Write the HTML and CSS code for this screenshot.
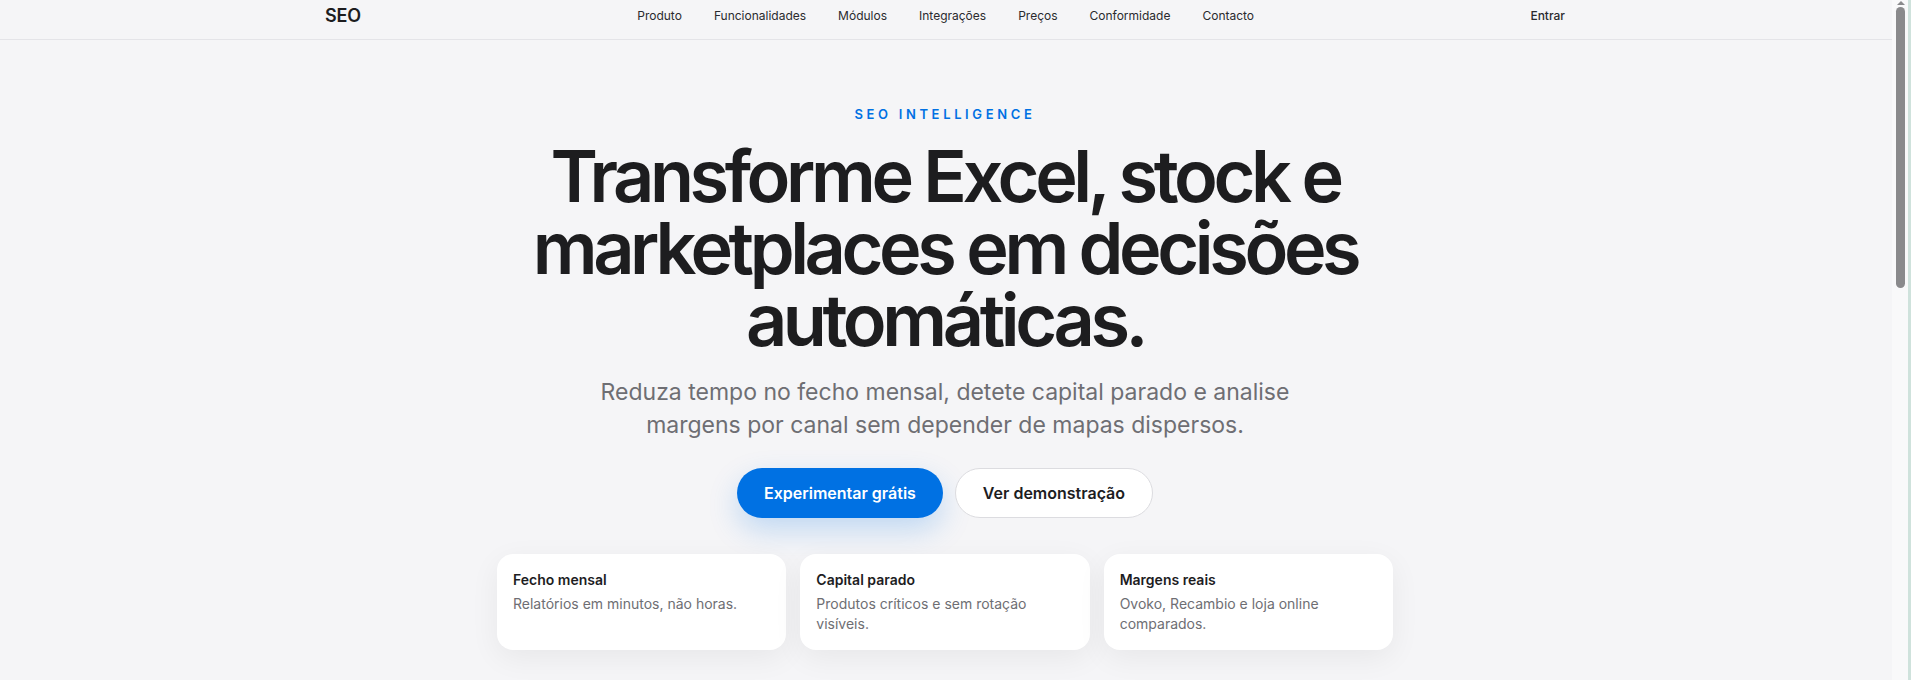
FILE: index.html
```html
<!DOCTYPE html>
<html lang="pt">
<head>
<meta charset="utf-8">
<title>SEO — Inteligência para stock e marketplaces</title>
<link rel="stylesheet" href="styles.css">
</head>
<body>
<header class="site-header">
  <div class="bar">
    <a class="logo" href="#">SEO</a>
    <nav class="menu">
      <a href="#">Produto</a>
      <a href="#">Funcionalidades</a>
      <a href="#">Módulos</a>
      <a href="#">Integrações</a>
      <a href="#">Preços</a>
      <a href="#">Conformidade</a>
      <a href="#">Contacto</a>
    </nav>
    <a class="login" href="#">Entrar</a>
  </div>
</header>

<main>
  <section class="hero">
    <p class="eyebrow">SEO INTELLIGENCE</p>
    <h1 class="title">Transforme Excel, stock e marketplaces em decisões automáticas.</h1>
    <p class="lead">Reduza tempo no fecho mensal, detete capital parado e analise margens por canal sem depender de mapas dispersos.</p>
    <div class="actions">
      <a class="btn btn-primary" href="#">Experimentar grátis</a>
      <a class="btn btn-secondary" href="#">Ver demonstração</a>
    </div>
    <div class="highlights">
      <div class="card">
        <h3>Fecho mensal</h3>
        <p>Relatórios em minutos, não horas.</p>
      </div>
      <div class="card">
        <h3>Capital parado</h3>
        <p>Produtos críticos e sem rotação visíveis.</p>
      </div>
      <div class="card">
        <h3>Margens reais</h3>
        <p>Ovoko, Recambio e loja online comparados.</p>
      </div>
    </div>
  </section>
</main>

<!-- window scroll rail, drawn over the right edge -->
<div class="scroll-rail" aria-hidden="true">
  <span class="rail-arrow"></span>
  <span class="rail-thumb"></span>
</div>
</body>
</html>
```

FILE: styles.css
```css
html {
  background: #f5f5f7;
}

body {
  margin: 0;
  padding-right: 21px;
  min-height: 680px;
  overflow: hidden;
  background: #f5f5f7;
  color: #1d1d1f;
  font-family: Inter, "Noto Sans", "Liberation Sans", sans-serif;
  -webkit-font-smoothing: antialiased;
}

a {
  color: inherit;
  text-decoration: none;
}

/* header */
.site-header {
  border-bottom: 1px solid #e4e4e8;
  margin-right: -21px;
  padding-right: 21px;
}
.bar {
  max-width: 1240px;
  margin: 0 auto;
  height: 30px;
  padding-bottom: 9px;
  display: flex;
  align-items: center;
  justify-content: space-between;
}
.logo {
  font-size: 18px;
  font-weight: 600;
  letter-spacing: -0.01em;
}
.menu {
  display: flex;
  gap: 32px;
}
.menu a,
.login {
  font-size: 12px;
  color: #2a2a2e;
}
.login {
  font-weight: 500;
}

/* hero */
.hero {
  padding-top: 64px;
  display: flex;
  flex-direction: column;
  align-items: center;
  text-align: center;
}
.eyebrow {
  margin: 0;
  font-size: 13px;
  line-height: 20px;
  font-weight: 600;
  letter-spacing: 0.28em;
  color: #0071e3;
}
.title {
  margin: 16px 0 0;
  max-width: 900px;
  font-size: 72px;
  line-height: 72px;
  font-weight: 600;
  letter-spacing: -0.061em;
}
.lead {
  margin: 20px 0 0;
  max-width: 740px;
  font-size: 23px;
  line-height: 33px;
  color: #6e6e73;
}
.actions {
  margin-top: 26px;
  display: flex;
  gap: 12px;
}
.btn {
  height: 50px;
  box-sizing: border-box;
  padding: 0 27px;
  border-radius: 25px;
  display: flex;
  align-items: center;
  font-size: 16px;
  font-weight: 600;
}
.btn-primary {
  background: #0071e3;
  color: #fff;
  box-shadow: 0 12px 30px rgba(0, 113, 227, 0.22);
}
.btn-secondary {
  background: #fff;
  border: 1px solid #dcdce0;
  color: #1d1d1f;
}

.highlights {
  margin-top: 36px;
  width: 896px;
  display: grid;
  grid-template-columns: repeat(3, 1fr);
  gap: 14px;
  text-align: left;
}
.card {
  background: #fff;
  border-radius: 16px;
  padding: 16px;
  box-shadow: 0 8px 30px rgba(0, 0, 0, 0.06);
}
.card h3 {
  margin: 0;
  font-size: 14px;
  line-height: 20px;
  font-weight: 600;
}
.card p {
  margin: 4px 0 0;
  font-size: 14px;
  line-height: 20px;
  color: #6e6e73;
}

/* scroll rail */
.scroll-rail {
  position: fixed;
  top: 0;
  right: 0;
  bottom: 0;
  width: 16px;
  background: #f9f9fa;
  border-right: 3px solid #cfe2dc;
}
.rail-arrow {
  position: absolute;
  top: 1px;
  left: 5px;
  width: 0;
  height: 0;
  border-left: 4px solid transparent;
  border-right: 4px solid transparent;
  border-bottom: 4px solid #8a8a8c;
}
.rail-thumb {
  position: absolute;
  top: 7px;
  left: 4px;
  width: 9px;
  height: 281px;
  border-radius: 5px;
  background: #8a8a8c;
}
```
